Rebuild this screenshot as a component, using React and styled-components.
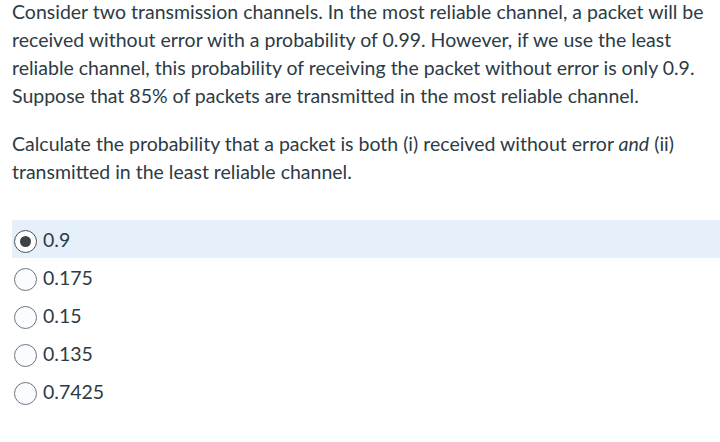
import React from "react";
import styled, { createGlobalStyle } from "styled-components";

const Global = createGlobalStyle`
  html, body {
    margin: 0;
    padding: 0;
    background: #ffffff;
  }
  body {
    font-family: Lato, "Open Sans", sans-serif;
    color: #2d3b45;
  }
`;

const Page = styled.div`
  width: 720px;
  box-sizing: border-box;
  padding: 0 0 0 12px;
  margin-top: -2px;
`;

const Para = styled.p`
  margin: 0 0 20px;
  font-size: 19.5px;
  line-height: 28px;
  white-space: nowrap;
`;

const Options = styled.div`
  display: flex;
  flex-direction: column;
  margin-top: 34px;
`;

const Option = styled.label`
  display: flex;
  align-items: center;
  gap: 6px;
  height: 38px;
  padding-left: 2px;
  font-size: 19.5px;
  background: ${(p) => (p.$selected ? "#e6f0fa" : "transparent")};
`;

const Radio = styled.span`
  box-sizing: border-box;
  width: 23px;
  height: 23px;
  border-radius: 50%;
  margin-top: 5px;
  border: ${(p) => (p.$checked ? "1.5px solid #4a4f55" : "1px solid #6b7780")};
  background: ${(p) => (p.$checked ? "#ffffff" : "#fbfcff")};
  display: flex;
  align-items: center;
  justify-content: center;

  &::after {
    content: "";
    display: ${(p) => (p.$checked ? "block" : "none")};
    width: 11px;
    height: 11px;
    border-radius: 50%;
    background: #3d4247;
  }
`;

const choices = ["0.9", "0.175", "0.15", "0.135", "0.7425"];

export default function App() {
  return (
    <>
      <Global />
      <Page>
        <Para>
          Consider two transmission channels. In the most reliable channel, a packet will be
          <br />
          received without error with a probability of 0.99. However, if we use the least
          <br />
          reliable channel, this probability of receiving the packet without error is only 0.9.
          <br />
          Suppose that 85% of packets are transmitted in the most reliable channel.
        </Para>
        <Para>
          Calculate the probability that a packet is both (i) received without error <em>and</em> (ii)
          <br />
          transmitted in the least reliable channel.
        </Para>
        <Options>
          {choices.map((c, i) => (
            <Option key={c} $selected={i === 0}>
              <Radio $checked={i === 0} />
              {c}
            </Option>
          ))}
        </Options>
      </Page>
    </>
  );
}
